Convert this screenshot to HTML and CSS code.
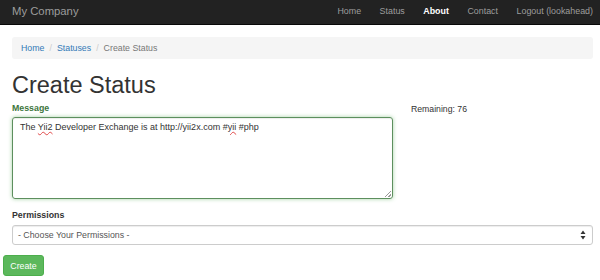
FILE: index.html
```html
<!DOCTYPE html>
<html>
<head>
<meta charset="utf-8">
<link rel="stylesheet" href="styles.css">
</head>
<body>
<nav class="navbar">
  <span class="brand">My Company</span>
  <ul class="nav">
    <li>Home</li>
    <li>Status</li>
    <li class="active">About</li>
    <li>Contact</li>
    <li>Logout (lookahead)</li>
  </ul>
</nav>
<div class="container">
  <ol class="breadcrumb">
    <li><a>Home</a></li>
    <li class="sep">/</li>
    <li><a>Statuses</a></li>
    <li class="sep">/</li>
    <li class="current">Create Status</li>
  </ol>
  <h1 class="title">Create Status</h1>
  <div class="row">
    <div class="field">
      <label class="label success">Message</label>
      <div class="textarea">The <span class="spell">Yii2</span> Developer Exchange is at http://yii2x.com #<span class="spell">yii</span> #php<span class="grip"></span></div>
    </div>
    <div class="remaining">Remaining: 76</div>
  </div>
  <label class="label perm">Permissions</label>
  <div class="select">
    <span>- Choose Your Permissions -</span>
    <svg class="arrows" width="6" height="10" viewBox="0 0 6 10"><path d="M3 0.5 L5.5 4 L0.5 4 Z M3 9.5 L5.5 6 L0.5 6 Z" fill="#333"/></svg>
  </div>
</div>
<div class="actions"><button class="btn">Create</button></div>
</body>
</html>
```
FILE: styles.css
```css
* { box-sizing: border-box; }
body {
  margin: 0;
  font-family: "Liberation Sans", Arial, sans-serif;
  font-size: 8.7px;
  color: #333;
  background: #fff;
}
.navbar {
  height: 25px;
  background: #222;
  border-bottom: 1px solid #080808;
  display: flex;
  align-items: center;
  justify-content: space-between;
  padding: 0 7px 0 12px;
}
.brand {
  color: #9d9d9d;
  font-size: 11.3px;
  margin-top: -2px;
}
.nav {
  list-style: none;
  margin: 0;
  padding: 0;
  display: flex;
  gap: 18.5px;
  color: #9d9d9d;
  font-size: 8.9px;
  margin-top: -2px;
}
.nav .active { color: #fff; font-weight: bold; }
.container {
  padding: 0 7px 0 12px;
}
.breadcrumb {
  list-style: none;
  margin: 12px 0 0;
  padding: 0 9px;
  height: 22px;
  background: #f5f5f5;
  border-radius: 3px;
  display: flex;
  align-items: center;
  gap: 5px;
  font-size: 8.8px;
}
.breadcrumb a { color: #337ab7; }
.breadcrumb .sep { color: #ccc; }
.breadcrumb .current { color: #777; }
.title {
  font-size: 23.5px;
  font-weight: 500;
  margin: 10px 0 0;
  line-height: 32px;
  color: #333;
}
.row {
  display: flex;
  gap: 18px;
  margin-top: 1px;
}
.field { width: 381px; }
.label {
  display: block;
  font-weight: bold;
  font-size: 8.8px;
  line-height: 12px;
  margin-bottom: 3px;
}
.success { color: #3c763d; }
.textarea {
  position: relative;
  height: 82px;
  border: 1px solid #5d8f5e;
  border-radius: 3px;
  box-shadow: inset 0 1px 1px rgba(0,0,0,.075), 0 0 4px #a6d3a6;
  padding: 3px 7px;
  font-size: 9px;
  line-height: 13px;
  color: #333;
}
.spell {
  text-decoration: underline wavy #e04a4a;
  text-decoration-thickness: 1px;
}
.grip {
  position: absolute;
  right: 1px;
  bottom: 1px;
  width: 6px;
  height: 6px;
  background: linear-gradient(135deg, transparent 45%, #999 45%, #999 55%, transparent 55%, transparent 75%, #999 75%, #999 85%, transparent 85%);
}
.remaining {
  margin-top: 1px;
  font-size: 8.7px;
  line-height: 12px;
  color: #333;
}
.perm { margin-top: 10px; margin-bottom: 4px; color: #333; }
.select {
  height: 20px;
  border: 1px solid #ccc;
  border-radius: 3px;
  display: flex;
  align-items: center;
  justify-content: space-between;
  padding: 0 6px 0 5px;
  font-size: 8.8px;
  color: #555;
  box-shadow: inset 0 1px 1px rgba(0,0,0,.075);
}
.arrows { display: block; }
.actions { padding: 10px 0 0 3px; }
.btn {
  width: 41px;
  height: 21px;
  background: #5cb85c;
  border: 1px solid #4cae4c;
  border-radius: 3px;
  color: #fff;
  font-family: "Liberation Sans", Arial, sans-serif;
  font-size: 8.8px;
  padding: 0;
}
```
